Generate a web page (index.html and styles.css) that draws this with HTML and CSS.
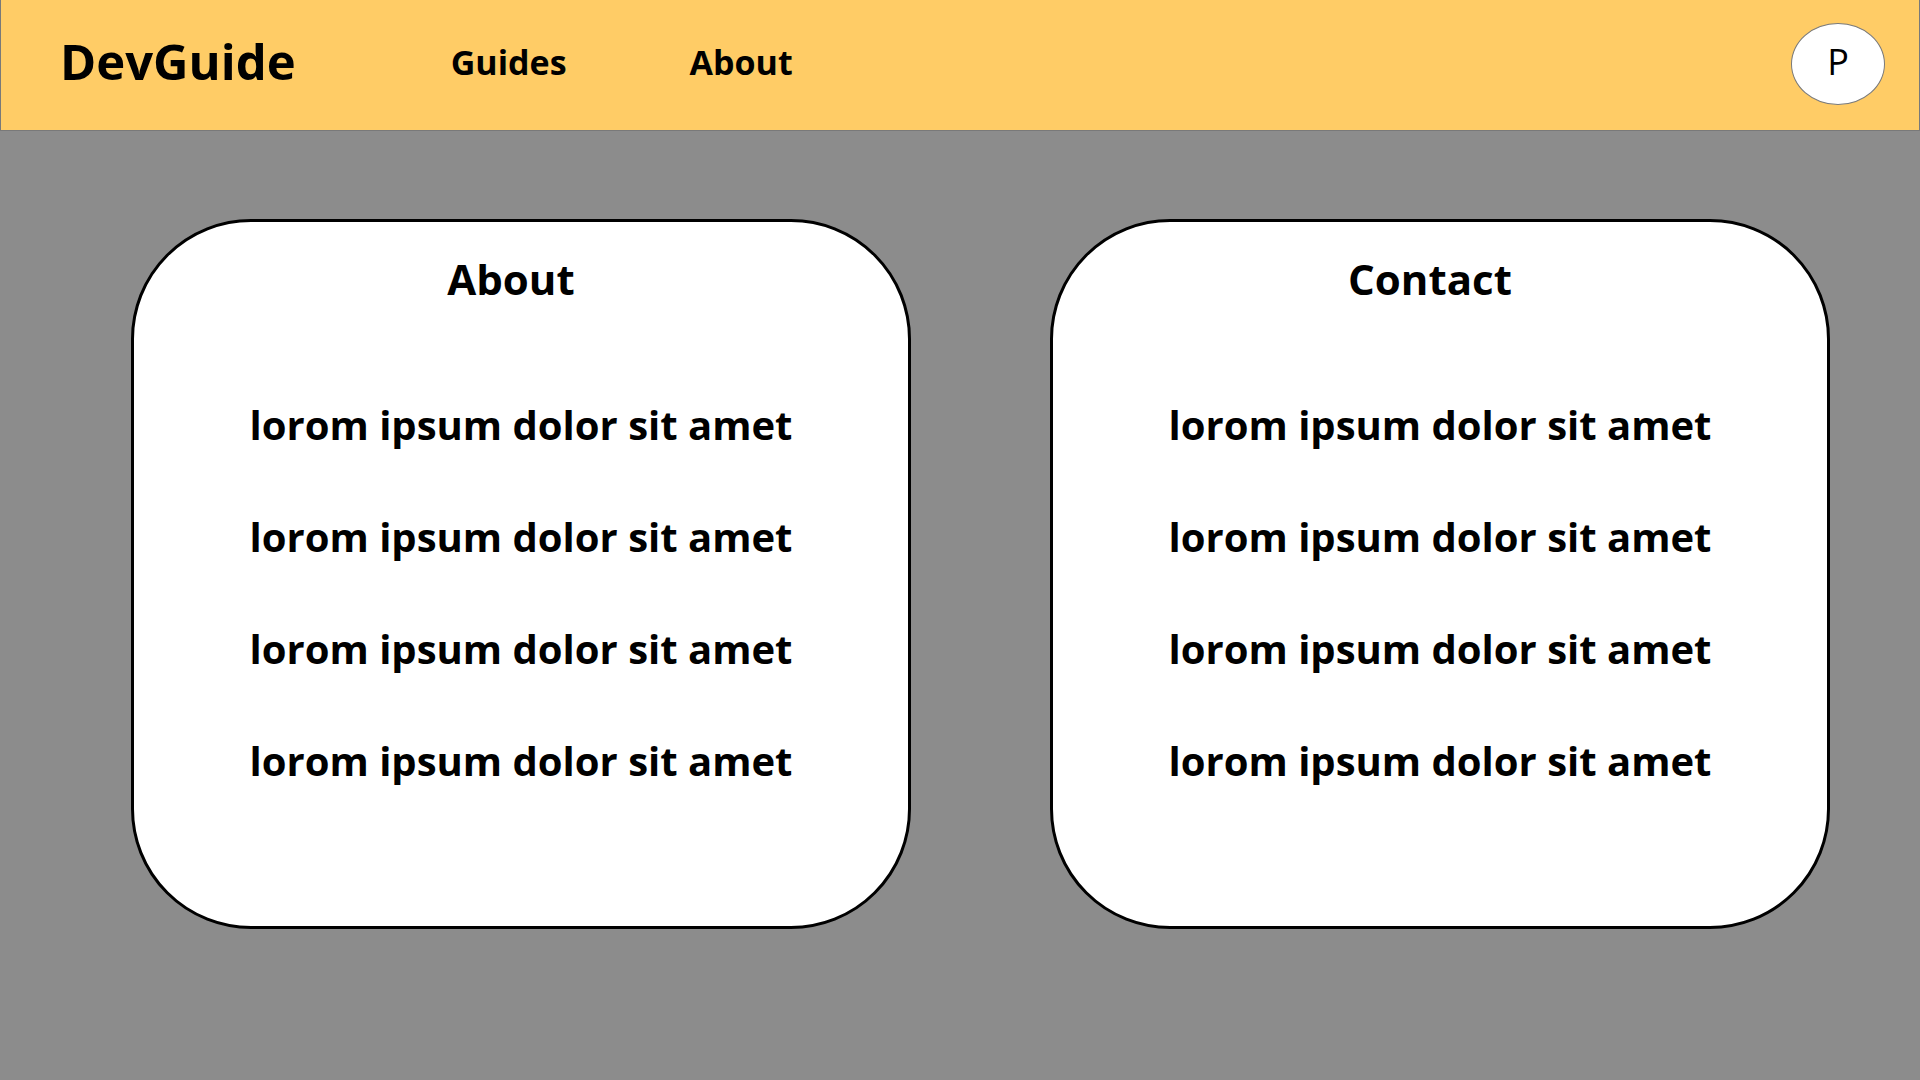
FILE: index.html
```html
<!DOCTYPE html>
<html lang="en">
<head>
<meta charset="utf-8">
<title>DevGuide</title>
<link rel="stylesheet" href="styles.css">
</head>
<body>
<header class="topbar">
  <a class="brand" href="#">DevGuide</a>
  <nav class="nav">
    <a href="#">Guides</a>
    <a href="#">About</a>
  </nav>
  <button class="avatar" type="button" title="Profile">P</button>
</header>
<main class="cards">
  <section class="card">
    <h2>About</h2>
    <p>lorom ipsum dolor sit amet</p>
    <p>lorom ipsum dolor sit amet</p>
    <p>lorom ipsum dolor sit amet</p>
    <p>lorom ipsum dolor sit amet</p>
  </section>
  <section class="card">
    <h2>Contact</h2>
    <p>lorom ipsum dolor sit amet</p>
    <p>lorom ipsum dolor sit amet</p>
    <p>lorom ipsum dolor sit amet</p>
    <p>lorom ipsum dolor sit amet</p>
  </section>
</main>
</body>
</html>
```
FILE: styles.css
```css
* { box-sizing: border-box; }
body {
  margin: 0;
  min-height: 100vh;
  background: #8c8c8c;
  color: #000;
  font-family: "Segoe UI", "Open Sans", "Noto Sans", sans-serif;
}
.topbar {
  display: flex;
  align-items: center;
  padding: 23px 34px 25px 59px;
  background: #ffcc66;
  border: 1px solid #797979;
  border-top: 0;
}
.topbar a { color: inherit; text-decoration: none; font-weight: 700; }
.brand { padding-bottom: 6px; font-size: 49px; line-height: 76px; }
.nav {
  display: flex;
  gap: 123px;
  margin-left: 155px;
  padding-bottom: 4px;
  font-size: 34px;
  line-height: 48px;
}
.avatar {
  width: 94px;
  height: 82px;
  margin-left: auto;
  padding: 0 0 4px;
  border: 1px solid #797979;
  border-radius: 50%;
  background: #fff;
  color: inherit;
  font-family: inherit;
  font-size: 36px;
  line-height: 48px;
}
.cards {
  display: grid;
  grid-template-columns: 1fr 1fr;
  gap: 139px;
  padding: 88px 90px 88px 131px;
}
.card {
  padding: 25px 0 109px;
  border: 3px solid #000;
  border-radius: 120px;
  background: #fff;
  text-align: center;
}
.card h2 { margin: 0 20px 58px 0; font-size: 42px; line-height: 64px; }
.card p { margin: 0; font-size: 40px; line-height: 112px; font-weight: 700; }
```
